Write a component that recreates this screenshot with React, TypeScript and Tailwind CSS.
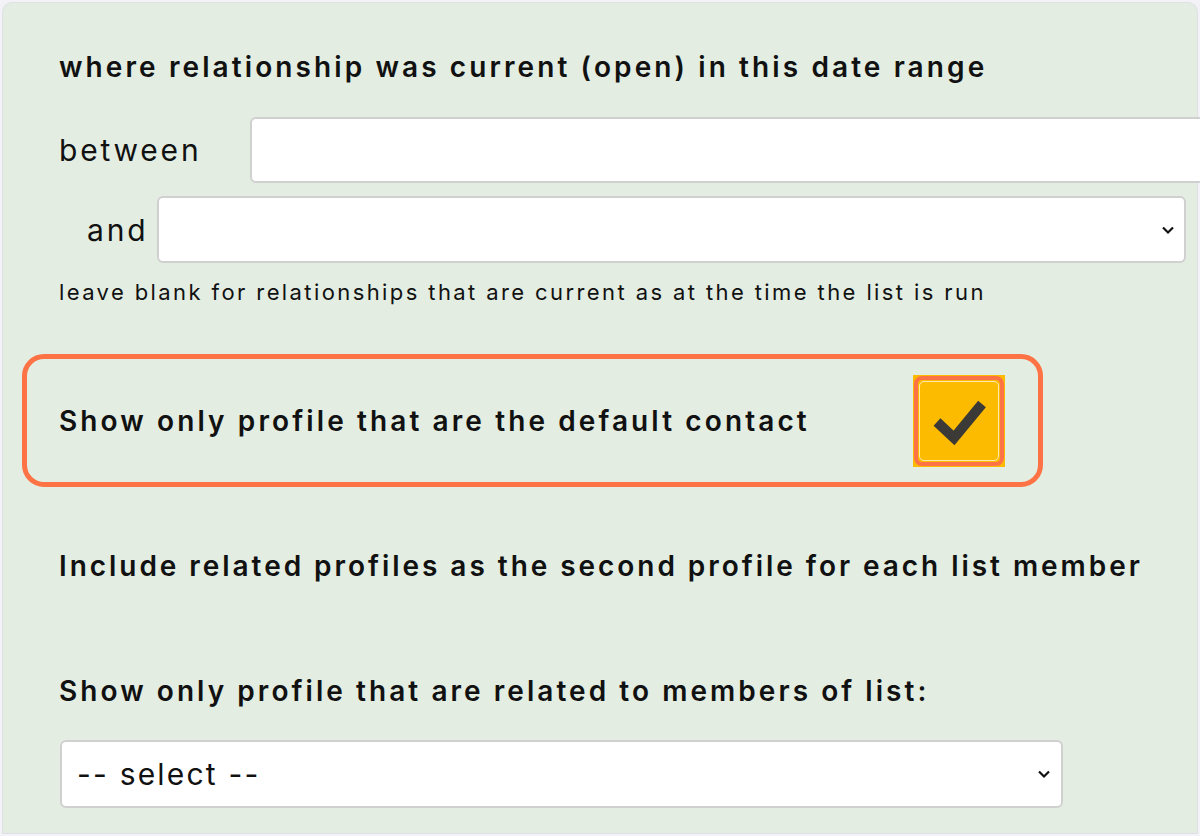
import React from "react";

const Chevron: React.FC = () => (
  <svg width="14" height="10" viewBox="0 0 14 10" className="shrink-0">
    <path d="M2 2.5 L7 7.5 L12 2.5" fill="none" stroke="#111" strokeWidth="2.2" />
  </svg>
);

const App: React.FC = () => {
  return (
    <div
      className="w-[1200px] h-[836px] overflow-hidden bg-[#f3f2f6] p-[2px]"
      style={{ fontFamily: "Inter, 'Noto Sans', sans-serif" }}
    >
      <div className="h-full bg-[#e3ede2] rounded-t-[10px] pl-[56px] pt-[43px] text-[#111] border border-[#e0e0e6]">
        {/* Date range */}
        <h2 className="text-[28px] leading-[42px] font-semibold tracking-[3.1px] whitespace-nowrap">
          where relationship was current (open) in this date range
        </h2>

        <div className="flex items-center mt-[29px]">
          <span className="w-[191px] shrink-0 text-[30px] leading-[40px] tracking-[2.8px]">between</span>
          <div className="w-[980px] h-[66px] bg-white border-2 border-[#d0d0d0] rounded-[6px] shrink-0" />
        </div>

        <div className="flex items-center mt-[13px] pl-[28px]">
          <span className="w-[70px] shrink-0 text-[30px] leading-[40px] tracking-[2.8px]">and</span>
          <div className="w-[1029px] h-[67px] shrink-0 bg-white border-2 border-[#d0d0d0] rounded-[6px] flex items-center justify-end pr-[9px]">
            <Chevron />
          </div>
        </div>

        <p className="mt-[14px] text-[22px] leading-[30px] tracking-[2.4px] whitespace-nowrap">
          leave blank for relationships that are current as at the time the list is run
        </p>

        {/* Highlighted default contact option */}
        <div className="-ml-[37px] mt-[47px] w-[1021px] h-[133px] border-[5px] border-[#fd7345] rounded-[22px] flex items-center pl-[32px]">
          <span className="w-[854px] shrink-0 text-[28px] leading-[42px] font-semibold tracking-[3.1px] whitespace-nowrap">
            Show only profile that are the default contact
          </span>
          <div className="w-[92px] h-[92px] shrink-0 bg-[#fdbb00] p-[1px]">
            <div className="w-full h-full border-[4px] border-[#fd7345] rounded-[8px] p-[1px]">
              <div className="w-full h-full border border-[#fde9b0] rounded-[5px] flex items-center justify-center">
                <svg width="60" height="50" viewBox="0 0 60 50">
                  <path
                    d="M8 26 L25 42 L53 8"
                    fill="none"
                    stroke="#3b3a36"
                    strokeWidth="10"
                  />
                </svg>
              </div>
            </div>
          </div>
        </div>

        <h3 className="mt-[58px] text-[28px] leading-[42px] font-semibold tracking-[2.95px] whitespace-nowrap">
          Include related profiles as the second profile for each list member
        </h3>

        <h3 className="mt-[83px] text-[28px] leading-[42px] font-semibold tracking-[3.05px] whitespace-nowrap">
          Show only profile that are related to members of list:
        </h3>

        <div className="mt-[28px] ml-[1px] w-[1003px] h-[68px] bg-white border-2 border-[#d0d0d0] rounded-[6px] flex items-center justify-between pl-[15px] pr-[10px]">
          <span className="text-[30px] leading-[40px] tracking-[2.2px]">-- select --</span>
          <Chevron />
        </div>
      </div>
    </div>
  );
};

export default App;
